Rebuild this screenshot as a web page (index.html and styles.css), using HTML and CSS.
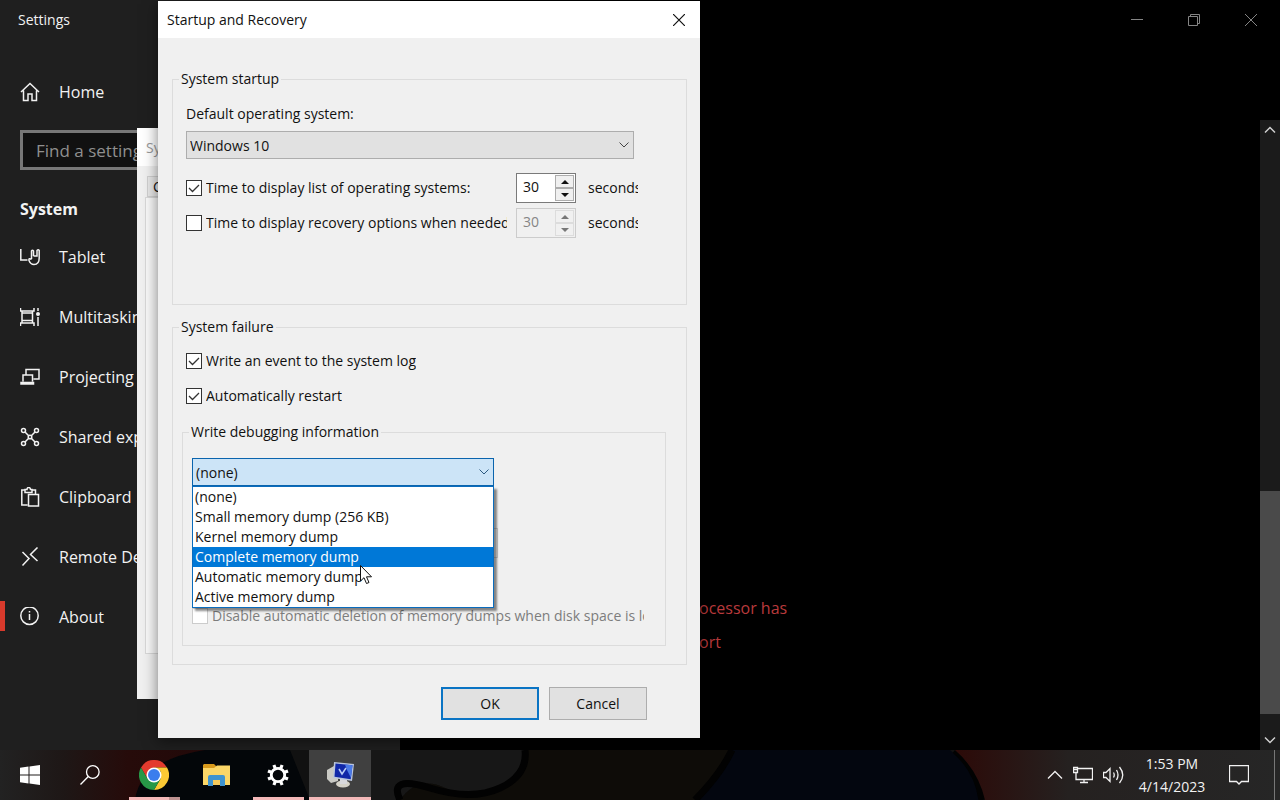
FILE: index.html
```html
<!DOCTYPE html>
<html lang="en">
<head>
<meta charset="utf-8">
<title>Startup and Recovery</title>
<link rel="stylesheet" href="styles.css">
</head>
<body>
<div class="desktop">
  <div class="settings">
    <aside class="sidebar">
      <div class="app-title">Settings</div>
      <nav class="nav">
        <a class="nav-item home" href="#">
          <svg class="icon" viewBox="0 0 20 20"><path d="M1 10 10 1.500 19 10M3.500 8.500V18.500H8V12H12V18.500H16.500V8.500"/></svg>Home</a>
        <input class="search" type="text" placeholder="Find a setting" aria-label="Find a setting">
        <h2 class="nav-heading">System</h2>
        <a class="nav-item" href="#">
          <svg class="icon" viewBox="0 0 20 20"><path d="M.8 2V13H7.500M11.500 12V4Q12.500 2.500 13.500 4V9M13.500 9H17V3.500Q18.200 2 19.200 3.500V11Q19.200 17.500 14 17.500 10.500 17.500 9 13.500 8.500 10.500 11.500 12.500"/></svg>Tablet</a>
        <a class="nav-item" href="#">
          <svg class="icon" viewBox="0 0 20 20"><path d="M.5 1V4H14V1M.5 19V16H14V19M2 4V16M12.500 4V16M2 13.500H12.500M2 6H12.500M18 1V4M18 10V19"/><circle class="solid" cx="18" cy="7" r="2"/></svg>Multitasking</a>
        <a class="nav-item" href="#">
          <svg class="icon" viewBox="0 0 20 20"><path d="M6 8V2.500H19V12H13.500M3 14.500V8H12.500V14.500M1 15.500H13.500V17H1Z"/></svg>Projecting to this PC</a>
        <a class="nav-item" href="#">
          <svg class="icon" viewBox="0 0 20 20"><circle cx="3.500" cy="3.500" r="2"/><circle cx="16.500" cy="3.500" r="2"/><circle cx="3.500" cy="16.500" r="2"/><circle cx="16.500" cy="16.500" r="2"/><circle cx="10" cy="10" r="1.800"/><path d="M5 5 8.700 8.700M15 5 11.300 8.700M5 15 8.700 11.300M15 15 11.300 11.300"/></svg>Shared experiences</a>
        <a class="nav-item" href="#">
          <svg class="icon" viewBox="0 0 20 20"><path d="M7.500 18H1.800V3H5M12 3H15.500V7M5 5.500V2.500H7Q7 .5 8.700 .5T10.500 2.500H12V5.500ZM8.500 7.500H18.500V19H8.500Z"/></svg>Clipboard</a>
        <a class="nav-item" href="#">
          <svg class="icon" viewBox="0 0 20 20"><path d="M2.500 5 9 11.500 2.500 18.500M17.500 .5 10.500 7.500 17.500 14"/></svg>Remote Desktop</a>
        <a class="nav-item current" href="#">
          <svg class="icon" viewBox="0 0 20 20"><circle cx="9.500" cy="8.700" r="8.700"/><path d="M9.500 7V13M9.500 4V5.500"/></svg>About</a>
      </nav>
    </aside>
    <main class="content">
      <div class="page">
        <div class="window-controls">
          <button type="button" aria-label="Minimize"><svg viewBox="0 0 12 12"><path d="M0 5.500H12"/></svg></button>
          <button type="button" aria-label="Restore"><svg viewBox="0 0 12 12"><path d="M.5 2.500H9.500V11.500H.5ZM2.500 2.500V.5H11.500V9.500H9.500"/></svg></button>
          <button type="button" aria-label="Close"><svg viewBox="0 0 12 12"><path d="M0 0 12 12M12 0 0 12"/></svg></button>
        </div>
        <p class="notice">ocessor has<br>ort</p>
      </div>
      <div class="scrollbar">
        <svg viewBox="0 0 12 8"><path d="M1 6.500 6 1.500 11 6.500"/></svg>
        <div class="thumb"></div>
        <svg viewBox="0 0 12 8"><path d="M1 1.500 6 6.500 11 1.500"/></svg>
      </div>
    </main>
  </div>

  <section class="window back-window">
    <div class="back-title">Sy</div>
    <div class="back-tab">C</div>
    <div class="back-pane"></div>
  </section>

  <section class="window dialog" role="dialog" aria-labelledby="dialog-title">
    <header class="dialog-bar">
      <h1 id="dialog-title">Startup and Recovery</h1>
      <button class="close" type="button" aria-label="Close"><svg viewBox="0 0 12 12"><path d="M0 0 12 12M12 0 0 12"/></svg></button>
    </header>
    <form class="dialog-body">
      <fieldset class="group startup">
        <legend>System startup</legend>
        <div class="startup-body">
          <label for="os">Default operating system:</label>
          <div class="combo os-combo">
            <select id="os"><option>Windows 10</option></select>
            <svg class="chevron" viewBox="0 0 10 6"><path d="M.5 .5 5 5 9.500 .5"/></svg>
          </div>
          <div class="time-row">
            <label class="check"><input type="checkbox" checked><span>Time to display list of operating systems:</span></label>
            <div class="spin">
              <input type="text" value="30" aria-label="Seconds to display operating systems">
              <div class="steps"><button type="button" aria-label="Increase"><i class="up"></i></button><button type="button" aria-label="Decrease"><i class="down"></i></button></div>
            </div>
            <span class="unit">seconds</span>
          </div>
          <div class="time-row">
            <label class="check"><input type="checkbox"><span>Time to display recovery options when needed:</span></label>
            <div class="spin off">
              <input type="text" value="30" aria-label="Seconds to display recovery options" disabled>
              <div class="steps"><button type="button" aria-label="Increase" disabled><i class="up"></i></button><button type="button" aria-label="Decrease" disabled><i class="down"></i></button></div>
            </div>
            <span class="unit">seconds</span>
          </div>
        </div>
      </fieldset>

      <fieldset class="group failure">
        <legend>System failure</legend>
        <div class="failure-body">
          <label class="check"><input type="checkbox" checked><span>Write an event to the system log</span></label>
          <label class="check"><input type="checkbox" checked><span>Automatically restart</span></label>
          <fieldset class="group debug">
            <legend>Write debugging information</legend>
            <div class="debug-body">
              <div class="combo dump-combo">
                <select class="open" aria-label="Write debugging information"><option>(none)</option></select>
                <svg class="chevron" viewBox="0 0 10 6"><path d="M.5 .5 5 5 9.500 .5"/></svg>
                <ul class="options" role="listbox">
                  <li role="option">(none)</li>
                  <li role="option">Small memory dump (256 KB)</li>
                  <li role="option">Kernel memory dump</li>
                  <li role="option" class="hot" aria-selected="true">Complete memory dump</li>
                  <li role="option">Automatic memory dump</li>
                  <li role="option">Active memory dump</li>
                </ul>
              </div>
              <input class="dump-file" type="text" aria-label="Dump file" disabled>
              <label class="check muted"><input type="checkbox" disabled><span>Disable automatic deletion of memory dumps when disk space is low</span></label>
            </div>
          </fieldset>
        </div>
      </fieldset>

      <div class="actions">
        <button class="push default" type="button">OK</button>
        <button class="push" type="button">Cancel</button>
      </div>
    </form>
  </section>

  <svg class="cursor" viewBox="0 0 12 20"><path d="M.5 .5V16L4 12.700 6.500 18.500 9 17.500 6.500 11.800H11.500Z"/></svg>
</div>

<footer class="taskbar">
  <svg class="wallpaper" viewBox="0 0 1280 50" preserveAspectRatio="none">
    <defs>
      <linearGradient id="base"><stop offset="0" stop-color="#222"/><stop offset=".05" stop-color="#1e1716"/><stop offset=".1" stop-color="#260b0a"/><stop offset=".16" stop-color="#220909"/><stop offset=".2" stop-color="#111"/></linearGradient>
      <linearGradient id="ember"><stop offset="0" stop-color="#2c0a08"/><stop offset=".35" stop-color="#252120"/><stop offset="1" stop-color="#262626"/></linearGradient>
    </defs>
    <rect width="1280" height="50" fill="url(#base)"/>
    <path d="M135 50Q140 10 205 0H290L310 50Z" fill="#030609"/>
    <path d="M371 0H525Q528 25 500 38T445 38 400 50H371Z" fill="#171717"/>
    <path d="M525 0Q528 25 500 38T445 38 400 50H695L732 0Z" fill="#0e0c08"/>
    <path d="M732 0 695 50H980Q975 20 950 0Z" fill="#03060f"/>
    <path d="M525 0Q528 25 500 38T430 38 400 50M732 0Q720 25 695 50M955 0Q978 20 982 50" fill="none" stroke="#020202" stroke-width="7"/>
    <path d="M955 0H1280V50H985Q978 20 955 0Z" fill="url(#ember)"/>
  </svg>
  <div class="tasks">
    <button class="task wide" type="button" aria-label="Start"><svg width="20" height="20" viewBox="0 0 20 20"><path fill="#fff" d="M0 2.800 8.500 1.600V9.500H0ZM9.500 1.400 20 0V9.500H9.500ZM0 10.500H8.500V18.500L0 17.300ZM9.500 10.500H20V20L9.500 18.600Z"/></svg></button>
    <button class="task wide" type="button" aria-label="Search"><svg width="20" height="20" viewBox="0 0 20 20" fill="none" stroke="#fff" stroke-width="1.300"><circle cx="12.800" cy="7" r="6.300"/><path d="M8.300 11.500 .5 19.500"/></svg></button>
    <button class="task first open multi" type="button" aria-label="Chrome"><svg width="30" height="30" viewBox="0 0 30 30"><path fill="#e33b2e" d="M2 7.500A15 15 0 0 1 28 7.500H15L8.500 18.800Z"/><path fill="#fcc934" d="M28 7.500A15 15 0 0 1 15 30L21.500 18.800 21.500 11 15 7.500Z"/><path fill="#279847" d="M2 7.500A15 15 0 0 0 15 30L21.500 18.800H8.500Z"/><circle cx="15" cy="15" r="7.500" fill="#fff"/><circle cx="15" cy="15" r="6" fill="#3b7ded"/></svg></button>
    <button class="task" type="button" aria-label="File Explorer"><svg width="27" height="22" viewBox="0 0 27 22"><path fill="#d99a1c" d="M1 0H11L13 2V6H0V1Z"/><path fill="#fbd667" d="M0 4H11L14 1.500H27V21H0Z"/><path fill="#3f93cf" d="M5 22V13Q5 11 7 11H20Q22 11 22 13V22H17V16H10V22Z"/><path fill="#f6c95a" d="M10 16H17V21H10Z"/></svg></button>
    <button class="task open" type="button" aria-label="Settings"><svg width="22" height="22" viewBox="0 0 22 22" fill="none" stroke="#fff"><circle cx="11" cy="11" r="6.700" stroke-width="2.800"/><path d="M8.300 4.500 6.900 1M13.700 4.500 15.100 1M8.300 17.500 6.900 21M13.700 17.500 15.100 21M4.500 8.300 1 6.900M4.500 13.700 1 15.100M17.500 8.300 21 6.900M17.500 13.700 21 15.100" stroke-width="3.200"/></svg></button>
    <button class="task open active" type="button" aria-label="System Properties"><svg width="28" height="26" viewBox="0 0 28 26"><path fill="#c9c9c4" d="M1 8 8 4 12 7V19L5 21 1 17Z"/><ellipse cx="17" cy="22" rx="7" ry="3.500" fill="#d5d2c8"/><path fill="#d8d8dc" d="M14 17H21V22H14Z"/><path fill="#b9c5dc" d="M8 0 28 2 26 19 7 16Z"/><path fill="#1027a8" d="M9.500 1.500 26.500 3.300 24.700 17.300 8.500 14.800Z"/><path fill="#4b7be8" d="M19 2.500 26.500 3.300 25 16 21 8Z"/><path d="M13 7 16 12 20 6" fill="none" stroke="#b9ccf5" stroke-width="1.500"/></svg></button>
  </div>
  <div class="tray">
    <svg width="16" height="10" viewBox="0 0 16 10"><path d="M1 8.500 8 1.500 15 8.500"/></svg>
    <svg width="20" height="18" viewBox="0 0 20 18"><path d="M5 2.500H19.500V13.500H3V7M11 13.500V16.500M7 16.500H15M.5 1.500H4.500V6.500H.5ZM.5 3.500H4.500"/></svg>
    <svg width="21" height="18" viewBox="0 0 21 18"><path d="M.5 6.500H3L7 2.500V15.500L3 11.500H.5ZM10.500 6.500Q12 9 10.500 11.500M13.500 4Q16.500 9 13.500 14M16.500 1Q23 9 16.500 17"/></svg>
    <div class="clock"><span>1:53 PM</span><span>4/14/2023</span></div>
    <svg width="20" height="20" viewBox="0 0 20 20"><path d="M.5 .5H19.500V16.500H12.500L10 19 7.500 16.500H.5Z"/></svg>
    <div class="peek"></div>
  </div>
</footer>
</body>
</html>
```
FILE: styles.css
```css
* { box-sizing: border-box; }

body {
  margin: 0;
  min-height: 100vh;
  display: flex;
  flex-direction: column;
  background: #000;
  font: 14px/20px "Open Sans", "Noto Sans", sans-serif;
  color: #111;
}

button, input, select { font: inherit; color: inherit; margin: 0; }
h1, h2, p, ul { margin: 0; padding: 0; font: inherit; }

.desktop {
  position: relative;
  flex: 1;
  display: flex;
}

/* Settings app */
.settings { flex: 1; display: flex; }

.sidebar {
  width: 400px;
  background: #1f1f1f;
  color: #f2f2f2;
}

.app-title { padding: 10px 18px; }

.nav {
  display: flex;
  flex-direction: column;
  padding-top: 22px;
  font-size: 17px;
}

.nav-item {
  display: flex;
  align-items: center;
  gap: 19px;
  width: 150px;
  height: 60px;
  padding: 0 0 1px 20px;
  overflow: hidden;
  white-space: nowrap;
  font-size: 16px;
  color: inherit;
  text-decoration: none;
}

.nav-item.current {
  background: linear-gradient(#d83a2c, #d83a2c) 0 14px / 5px 30px no-repeat;
}

.icon {
  flex: none;
  width: 20px;
  height: 20px;
  fill: none;
  stroke: #f2f2f2;
  stroke-width: 1.5;
}
.icon .solid { fill: #f2f2f2; stroke: none; }

.search {
  height: 40px;
  margin: 8px 20px 0;
  padding: 0 13px;
  border: 3px solid #777;
  border-radius: 0;
  background: #111;
}
.search::placeholder { color: #8f8f8f; opacity: 1; }

.nav-heading {
  padding: 26px 20px 5px;
  font-size: 16px;
  line-height: 26px;
  font-weight: 700;
}

.content { flex: 1; display: flex; }
.page { flex: 1; }

.window-controls {
  display: flex;
  justify-content: flex-end;
  margin-right: -19px;
}
.window-controls button {
  width: 57px;
  height: 38px;
  padding: 0;
  border: 0;
  background: none;
}
.window-controls svg {
  width: 12px;
  height: 12px;
  fill: none;
  stroke: #858585;
  vertical-align: middle;
}

.notice {
  padding: 553px 0 0 299px;
  font-size: 16px;
  line-height: 34px;
  color: #b93a3c;
}

.scrollbar {
  width: 20px;
  margin-top: 120px;
  padding: 6px 0;
  background: #1b1b1b;
  display: flex;
  flex-direction: column;
  align-items: center;
}
.scrollbar svg {
  width: 12px;
  height: 8px;
  fill: none;
  stroke: #d0d0d0;
  stroke-width: 1.5;
}
.thumb {
  width: 20px;
  height: 223px;
  margin: auto 0 22px;
  background: #4a4a4a;
}

/* Desktop windows */
.window { position: absolute; background: #f0f0f0; }

.back-window {
  left: 137px;
  top: 128px;
  width: 300px;
  height: 571px;
  display: flex;
  flex-direction: column;
}
.back-title {
  height: 38px;
  padding: 10px 9px;
  background: #fff;
  color: #999;
}
.back-tab {
  margin: 10px 0 0 10px;
  height: 21px;
  padding: 0 5px;
  border: 1px solid #d0d0d0;
  background: #e8e8e8;
}
.back-pane {
  flex: 1;
  margin: 0 0 45px 8px;
  border: 1px solid #d8d8d8;
  background: #f9f9f9;
}

.dialog {
  left: 158px;
  top: 1px;
  width: 542px;
  box-shadow: 0 3px 14px rgba(0, 0, 0, .5);
}

.dialog-bar {
  display: flex;
  align-items: center;
  justify-content: space-between;
  height: 37px;
  padding-left: 9px;
  background: #fff;
}
.close {
  width: 42px;
  height: 37px;
  padding: 0 0 2px;
  border: 0;
  background: none;
}
.close svg {
  width: 12px;
  height: 12px;
  fill: none;
  stroke: #111;
  stroke-width: 1.2;
  vertical-align: middle;
}

.dialog-body { padding: 31px 13px 18px 14px; }

.group {
  min-width: 0;
  margin: 0;
  padding: 0;
  border: 1px solid #dcdcdc;
}
.group legend { margin-left: 6px; padding: 0 2px; }

.startup-body {
  display: flex;
  flex-direction: column;
  padding: 15px 48px 66px 13px;
}

.combo { position: relative; height: 28px; }
.combo select {
  appearance: none;
  display: block;
  width: 100%;
  height: 28px;
  padding: 1px 3px 0;
  border: 1px solid #adadad;
  border-radius: 0;
  background: #e1e1e1;
}
.chevron {
  position: absolute;
  right: 5px;
  top: 11px;
  width: 10px;
  height: 6px;
  fill: none;
  stroke: #444;
  pointer-events: none;
}

.os-combo { margin: 7px 4px 14px 0; }

.time-row {
  display: grid;
  grid-template-columns: 1fr 60px 62px;
  align-items: center;
  height: 30px;
}
.time-row + .time-row { margin-top: 5px; }
.time-row .check { margin-right: 9px; }
.unit { margin-left: 12px; overflow: hidden; }

.check {
  display: flex;
  align-items: center;
  gap: 4px;
  height: 20px;
  overflow: hidden;
  white-space: nowrap;
}
.check span { overflow: hidden; }
.check input {
  appearance: none;
  flex: none;
  width: 16px;
  height: 16px;
  border: 1px solid #333;
  background: #fff;
}
.check input:checked {
  background: #fff url("data:image/svg+xml,%3Csvg xmlns='http://www.w3.org/2000/svg' viewBox='0 0 14 14'%3E%3Cpath d='M2 7l3.500 3.500L12 4' fill='none' stroke='%23333' stroke-width='1.300'/%3E%3C/svg%3E");
}
.check.muted { margin-right: 7px; color: #7d7d7d; }
.check.muted input { border-color: #ccc; }

.spin {
  display: flex;
  height: 30px;
  border: 1px solid #7a7a7a;
  background: #fff;
}
.spin input {
  flex: 1;
  min-width: 0;
  padding: 0 0 2px 6px;
  border: 0;
  background: none;
}
.steps {
  width: 21px;
  padding: 1px;
  display: flex;
  flex-direction: column;
}
.steps button {
  flex: 1;
  display: grid;
  place-items: center;
  padding: 0;
  border: 1px solid #adadad;
  background: #f0f0f0;
}
.up, .down {
  border: 4px solid transparent;
  border-top-width: 0;
  border-bottom-color: #111;
}
.down {
  border-width: 4px 4px 0;
  border-top-color: #111;
}
.spin.off { border-color: #ccc; background: #f0f0f0; color: #858585; }
.off .steps button { border-color: #dcdcdc; }
.off .up { border-bottom-color: #777; }
.off .down { border-top-color: #777; }

.failure { margin-top: 12px; }
.failure-body {
  display: flex;
  flex-direction: column;
  gap: 15px;
  padding: 14px 20px 18px 9px;
}
.failure-body > .check { margin-left: 4px; }
.debug { margin-top: 1px; }

.debug-body {
  display: flex;
  flex-direction: column;
  padding: 16px 14px 19px 9px;
}
.dump-combo { width: 302px; }
.combo .open { border-color: #0a64ad; background: #cce4f7; }
.dump-combo .chevron { stroke: #2c5a80; }

.options {
  position: absolute;
  left: 0;
  right: 0;
  top: 28px;
  border: 1px solid #0a6cbd;
  background: #fff;
  box-shadow: 3px 3px 2px rgba(0, 0, 0, .45);
  list-style: none;
}
.options li { padding-left: 2px; }
.options .hot { background: #0078d7; color: #fff; }

.dump-file {
  width: 306px;
  height: 30px;
  margin: 42px 0 48px;
  border: 1px solid #ccc;
  background: #f0f0f0;
}

.actions {
  display: flex;
  justify-content: flex-end;
  gap: 10px;
  padding: 22px 40px 0 0;
}
.push {
  width: 98px;
  height: 33px;
  padding: 0;
  border: 1px solid #adadad;
  background: #e1e1e1;
}
.push.default { border: 2px solid #0a74c4; }

.cursor {
  position: absolute;
  left: 360px;
  top: 565px;
  width: 12px;
  height: 20px;
  fill: #fff;
  stroke: #111;
}

/* Taskbar */
.taskbar {
  position: relative;
  display: flex;
  justify-content: space-between;
  height: 50px;
  background: #111;
  color: #f2f2f2;
}
.wallpaper {
  position: absolute;
  inset: 0;
  width: 100%;
  height: 100%;
}
.tasks, .tray { position: relative; display: flex; }

.task {
  display: grid;
  place-items: center;
  width: 62px;
  height: 50px;
  padding: 0;
  border: 0;
  background: none;
}
.task.wide { width: 60px; }
.task.first { margin-left: 3px; }
.task.open { background: linear-gradient(#f3b8b8, #f3b8b8) 50% 100% / 51px 3px no-repeat; }
.task.multi {
  background:
    linear-gradient(90deg, #f3b8b8 40px, #bd9290 40px) 50% 100% / 51px 3px no-repeat;
}
.task.active {
  background: linear-gradient(#f3b8b8, #f3b8b8) 0 100% / 100% 3px no-repeat #404040;
}

.tray { align-items: center; }
.tray svg {
  margin-right: 10px;
  fill: none;
  stroke: #f2f2f2;
  stroke-width: 1.3;
}
.clock {
  display: flex;
  flex-direction: column;
  align-items: center;
  width: 76px;
  margin-right: 19px;
  line-height: 23px;
}
.peek {
  height: 50px;
  width: 6px;
  margin-left: 15px;
  border-left: 1px solid #777;
}
```
